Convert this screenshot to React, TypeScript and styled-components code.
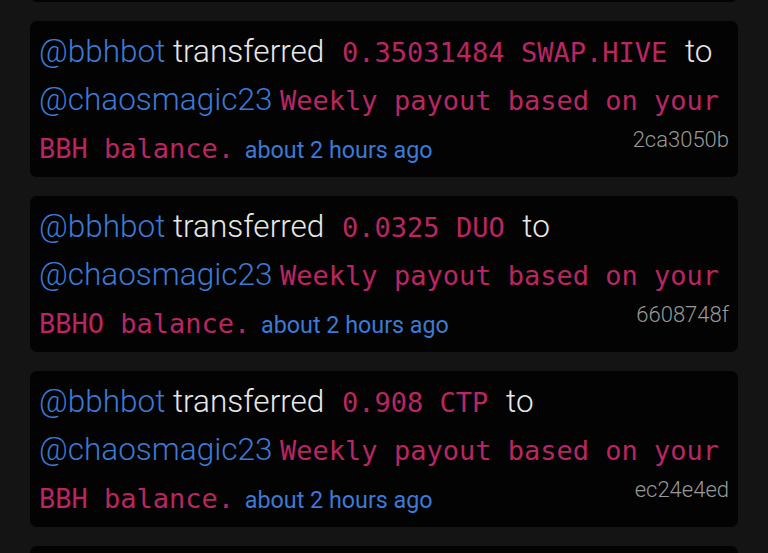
import React from "react";
import styled, { createGlobalStyle } from "styled-components";

const Global = createGlobalStyle`
  html, body { margin: 0; padding: 0; background: #141414; overflow: hidden; }
  body { font-family: Roboto, "Noto Sans", sans-serif; }
`;

const Page = styled.div`
  width: 768px;
  height: 553px;
  overflow: hidden;
  background: #141414;
`;

const List = styled.div`
  display: flex;
  flex-direction: column;
  gap: 19px;
  padding: 0 30px;
  margin-top: -154px;
`;

const Card = styled.div`
  background: #030303;
  border-radius: 7px;
  height: 156px;
  box-sizing: border-box;
  padding: 7px 9px 5px 9px;
  font-size: 31.5px;
  font-weight: 300;
  line-height: 48px;
  color: #e8e8e8;
  overflow: hidden;
`;

const User = styled.span`
  color: #3b7ad6;
`;

const Code = styled.code<{ $pad?: boolean }>`
  font-family: "DejaVu Sans Mono", "Liberation Mono", monospace;
  font-size: 27px;
  font-weight: 400;
  line-height: 1;
  color: #b92663;
  padding: ${(p) => (p.$pad ? "0 10px" : "0")};
`;

const Time = styled.span`
  color: #3b7ad6;
  font-size: 23.3px;
  font-weight: 400;
  line-height: 1;
  margin-left: 3px;
`;

const Hash = styled.span`
  float: right;
  color: #999999;
  font-size: 22px;
  font-weight: 300;
  line-height: 36px;
  margin-top: -2px;
`;

type Tx = { amount: string; token: string; balance: string; hash: string };

const txs: Tx[] = [
  { amount: "1.25", token: "BEE", balance: "BBH", hash: "aa11bb22" },
  { amount: "0.35031484", token: "SWAP.HIVE", balance: "BBH", hash: "2ca3050b" },
  { amount: "0.0325", token: "DUO", balance: "BBHO", hash: "6608748f" },
  { amount: "0.908", token: "CTP", balance: "BBH", hash: "ec24e4ed" },
  { amount: "0.5", token: "BEE", balance: "BBH", hash: "1f3c9a0d" },
];

export default function App() {
  return (
    <Page>
      <Global />
      <List>
        {txs.map((t, i) => (
          <Card key={i}>
            <User>@bbhbot</User> transferred{" "}
            <Code $pad>
              {t.amount} {t.token}
            </Code>{" "}
            to <User>@chaosmagic23</User>{" "}
            <Code>Weekly payout based on your {t.balance} balance.</Code>{" "}
            <Time>about 2 hours ago</Time>
            <Hash>{t.hash}</Hash>
          </Card>
        ))}
      </List>
    </Page>
  );
}
